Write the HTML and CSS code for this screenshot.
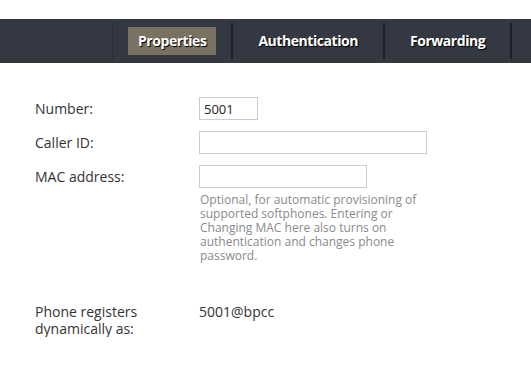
FILE: index.html
```html
<!DOCTYPE html>
<html lang="en">
<head>
  <meta charset="UTF-8" />
  <title>Extension properties</title>
  <link rel="stylesheet" href="styles.css">
</head>
<body>
  <div class="tabbar">
    <a class="tab active" href="#"><span>Properties</span></a>
    <a class="tab" href="#"><span>Authentication</span></a>
    <a class="tab" href="#"><span>Forwarding</span></a>
  </div>

  <form class="props">
    <label for="number">Number:</label>
    <div><input type="text" id="number" class="short" value="5001" /></div>

    <label for="callerid">Caller ID:</label>
    <div><input type="text" id="callerid" class="wide" /></div>

    <label for="mac">MAC address:</label>
    <div>
      <input type="text" id="mac" class="mid" />
      <p class="hint">Optional, for automatic provisioning of supported softphones. Entering or Changing MAC here also turns on authentication and changes phone password.</p>
    </div>

    <div class="label dyn">Phone registers dynamically as:</div>
    <div class="value dyn">5001@bpcc</div>
  </form>
</body>
</html>
```

FILE: styles.css
```css
body {
  margin: 0;
  padding: 0;
  font-family: "Open Sans", "Noto Sans", Arial, sans-serif;
  background: #fff;
  color: #333;
}

.tabbar {
  margin-top: 19px;
  height: 44px;
  background: #343842;
  display: flex;
  align-items: center;
  padding-left: 112px;
  white-space: nowrap;
  overflow: hidden;
}

.tab {
  display: flex;
  align-items: center;
  height: 36px;
  padding: 0 15px;
  border-left: 2px solid #1d1f24;
  text-decoration: none;
}

.tab:first-child {
  border-left: 1px solid #2a2d35;
}

.tab:last-child {
  border-right: 2px solid #1d1f24;
}

.tab span {
  display: block;
  padding: 4px 10px 5px;
  font-size: 14px;
  font-weight: bold;
  letter-spacing: -0.45px;
  color: #fff;
  text-shadow: 1px 1px 1px #000;
}

.tab.active span {
  background: #797262;
}

.props {
  display: grid;
  grid-template-columns: 164px 1fr;
  align-items: start;
  padding: 34px 0 0 35px;
  row-gap: 11px;
}

label, .label {
  font-size: 14px;
  line-height: 23px;
}

input {
  box-sizing: border-box;
  height: 23px;
  margin: 0;
  padding: 0 4px;
  border: 1px solid #cdcbda;
  font-family: inherit;
  font-size: 13px;
  color: #222;
  display: block;
}

.short { width: 59px; }
.wide { width: 228px; }
.mid { width: 168px; }

.hint {
  margin: 5px 0 0 1px;
  width: 240px;
  font-size: 12px;
  line-height: 14px;
  color: #8a8a8a;
}

.dyn {
  margin-top: 29px;
  font-size: 14px;
  line-height: 17px;
}

.label.dyn {
  width: 120px;
}
```
